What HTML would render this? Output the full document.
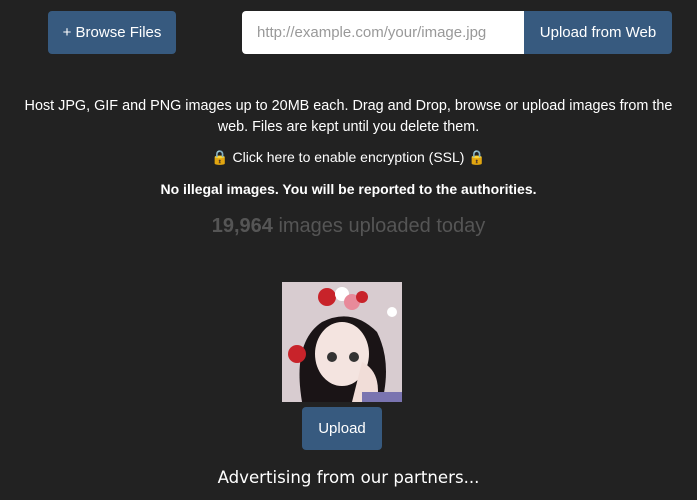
<!DOCTYPE html>
<html><head><style>
body{margin:0;background:#222;width:697px;height:500px;overflow:hidden;font-family:"Liberation Sans",sans-serif;color:#fff;position:relative}
.btn{position:absolute;background:#375a7f;border-radius:4px;color:#fff;font-size:15px;display:flex;align-items:center;justify-content:center}
.t{position:absolute;left:0;width:697px;text-align:center;font-size:14px}
</style></head><body>
<div class="btn" style="left:48px;top:11px;width:128px;height:43px">+ Browse Files</div>
<div style="position:absolute;left:242px;top:11px;width:282px;height:43px;background:#fff;border-radius:4px 0 0 4px;color:#999;font-size:15px;line-height:43px;padding-left:15px;box-sizing:border-box">http://example.com/your/image.jpg</div>
<div class="btn" style="left:524px;top:11px;width:148px;height:43px;border-radius:0 4px 4px 0">Upload from Web</div>
<div class="t" style="top:96px;line-height:21px;left:0;width:697px;font-size:14.4px">Host JPG, GIF and PNG images up to 20MB each. Drag and Drop, browse or upload images from the<br>web. Files are kept until you delete them.</div>
<div class="t" style="top:149px"><span style="color:#e8a800">🔒</span> Click here to enable encryption (SSL) <span style="color:#e8a800">🔒</span></div>
<div class="t" style="top:181px;font-weight:bold">No illegal images. You will be reported to the authorities.</div>
<div class="t" style="top:215px;font-size:20px;color:#555"><b>19,964</b> images uploaded today</div>
<svg style="position:absolute;left:282px;top:282px" width="120" height="120" viewBox="0 0 120 120">
<rect width="120" height="120" fill="#d8ccd0"/>
<path d="M20 120 Q10 60 40 40 Q70 25 95 50 Q110 80 100 120Z" fill="#1a1416"/>
<ellipse cx="60" cy="72" rx="27" ry="32" fill="#f4e4e0"/>
<circle cx="50" cy="75" r="5" fill="#333"/><circle cx="72" cy="75" r="5" fill="#333"/>
<path d="M80 80 Q100 90 95 120 L70 120Z" fill="#f1ddd8"/>
<circle cx="45" cy="15" r="9" fill="#c8232a"/><circle cx="60" cy="12" r="7" fill="#fff"/><circle cx="70" cy="20" r="8" fill="#e88a9a"/><circle cx="80" cy="15" r="6" fill="#c8232a"/><circle cx="15" cy="72" r="9" fill="#c8232a"/><circle cx="110" cy="30" r="5" fill="#fff"/>
<rect x="80" y="110" width="40" height="10" fill="#7a74b0"/>
</svg>
<div class="btn" style="left:302px;top:407px;width:80px;height:43px">Upload</div>
<div class="t" style="top:468px;font-size:16.6px;font-family:'DejaVu Sans',sans-serif">Advertising from our partners...</div>
</body></html>
